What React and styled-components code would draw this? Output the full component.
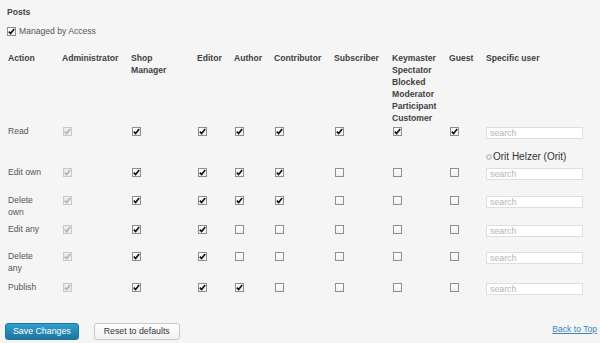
import React from 'react';
import styled, { createGlobalStyle } from 'styled-components';

const GlobalStyle = createGlobalStyle`
  html, body {
    margin: 0;
    padding: 0;
    background: #f5f5f5;
  }
  body {
    font-family: "Liberation Sans", Arial, sans-serif;
    font-size: 8.6px;
    color: #555;
  }
`;

const Page = styled.div`
  width: 600px;
  height: 343px;
  box-sizing: border-box;
  padding: 6px 3px 0 7px;
  overflow: hidden;
`;

const Title = styled.h3`
  margin: 0;
  font-size: 8.6px;
  line-height: 12px;
  font-weight: bold;
  color: #444;
`;

const Managed = styled.label`
  display: flex;
  align-items: center;
  gap: 3px;
  margin-top: 7px;
  line-height: 12px;
  color: #555;
`;

const Matrix = styled.div`
  display: grid;
  grid-template-columns: 54px 69px 66px 37px 40px 60px 58px 57px 37px 100px;
  grid-template-rows: 73px 26px 15px 28px 29px 27px 31px 20px;
  align-items: start;
  margin-top: 15px;
  padding-left: 1px;
  line-height: 12px;
`;

const Head = styled.div`
  font-weight: bold;
  color: #3f3f3f;
  padding-right: 8px;
`;

const Label = styled.div`
  color: #555;
  padding-right: 16px;
`;

const Cell = styled.div`
  display: flex;
  padding: 2px 0 0 1px;
`;

const Box = styled.span`
  display: inline-flex;
  align-items: center;
  justify-content: center;
  width: 9px;
  height: 9px;
  box-sizing: border-box;
  border: 1px solid ${p => (p.$disabled ? '#c9c9c9' : '#8e8e8e')};
  background: ${p => (p.$disabled ? '#ececec' : 'linear-gradient(#ffffff, #f0f0f0)')};
  svg {
    display: block;
  }
`;

const Search = styled.input`
  width: 97px;
  height: 12px;
  box-sizing: border-box;
  margin: 2px 0 0;
  padding: 0 3px;
  border: 1px solid #dedede;
  background: #fff;
  font-family: "Liberation Sans", Arial, sans-serif;
  font-size: 8.8px;
  color: #333;
  outline: none;
  &::placeholder {
    color: #b4b4b4;
  }
`;

const Tag = styled.div`
  grid-column: 10;
  display: flex;
  align-items: center;
  gap: 1px;
  color: #333;
  font-size: 10px;
`;

const Footer = styled.div`
  display: flex;
  align-items: center;
  margin: 22px 0 0 -2px;
`;

const Button = styled.button`
  height: 17px;
  box-sizing: border-box;
  padding: 0 ${p => (p.$primary ? '7px' : '9px')};
  margin-right: 15px;
  border-radius: 3px;
  border: 1px solid ${p => (p.$primary ? '#21759b' : '#c8c8c8')};
  background: ${p => (p.$primary ? 'linear-gradient(#2e9fd2, #21759b)' : 'linear-gradient(#fefefe, #f2f2f2)')};
  color: ${p => (p.$primary ? '#fff' : '#333')};
  font-family: "Liberation Sans", Arial, sans-serif;
  font-size: 8.8px;
  line-height: 15px;
  white-space: nowrap;
`;

const BackLink = styled.a`
  margin-left: auto;
  margin-top: -5px;
  color: #3a86b8;
  text-decoration: underline;
  font-size: 8.6px;
`;

function Check({ checked, disabled }) {
  return (
    <Box $disabled={disabled}>
      {checked && (
        <svg width="7" height="7" viewBox="0 0 7 7">
          <path
            d="M0.8 3.6 L2.6 5.5 L6.2 0.9"
            fill="none"
            stroke={disabled ? '#b2b2b2' : '#111'}
            strokeWidth="1.6"
          />
        </svg>
      )}
    </Box>
  );
}

function Remove() {
  return (
    <svg width="6" height="6" viewBox="0 0 6 6">
      <circle cx="3" cy="3" r="2.6" fill="#d0d0d0" stroke="#b8b8b8" strokeWidth="0.6" />
      <path d="M1.9 1.9 L4.1 4.1 M4.1 1.9 L1.9 4.1" stroke="#fff" strokeWidth="0.8" />
    </svg>
  );
}

const headers = [
  ['Action'],
  ['Administrator'],
  ['Shop Manager'],
  ['Editor'],
  ['Author'],
  ['Contributor'],
  ['Subscriber'],
  ['Keymaster', 'Spectator', 'Blocked', 'Moderator', 'Participant', 'Customer'],
  ['Guest'],
  ['Specific user'],
];

const rows = [
  { label: 'Read', caps: [1, 1, 1, 1, 1, 1, 1, 1] },
  { label: 'Edit own', caps: [1, 1, 1, 1, 1, 0, 0, 0], users: ['Orit Helzer (Orit)'] },
  { label: 'Delete own', caps: [1, 1, 1, 1, 1, 0, 0, 0] },
  { label: 'Edit any', caps: [1, 1, 1, 0, 0, 0, 0, 0] },
  { label: 'Delete any', caps: [1, 1, 1, 0, 0, 0, 0, 0] },
  { label: 'Publish', caps: [1, 1, 1, 1, 0, 0, 0, 0] },
];

export default function App() {
  return (
    <Page>
      <GlobalStyle />
      <Title>Posts</Title>
      <Managed>
        <Check checked />
        Managed by Access
      </Managed>

      <Matrix>
        {headers.map(lines => (
          <Head key={lines[0]}>
            {lines.map(l => (
              <div key={l}>{l}</div>
            ))}
          </Head>
        ))}

        {rows.map(row => (
          <React.Fragment key={row.label}>
            {row.users && row.users.map(u => (
              <Tag key={u}>
                <Remove />
                {u}
              </Tag>
            ))}
            <Label>{row.label}</Label>
            {row.caps.map((c, i) => (
              <Cell key={i}>
                <Check checked={!!c} disabled={i === 0} />
              </Cell>
            ))}
            <Search placeholder="search" />
          </React.Fragment>
        ))}
      </Matrix>

      <Footer>
        <Button $primary>Save Changes</Button>
        <Button>Reset to defaults</Button>
        <BackLink href="#">Back to Top</BackLink>
      </Footer>
    </Page>
  );
}
